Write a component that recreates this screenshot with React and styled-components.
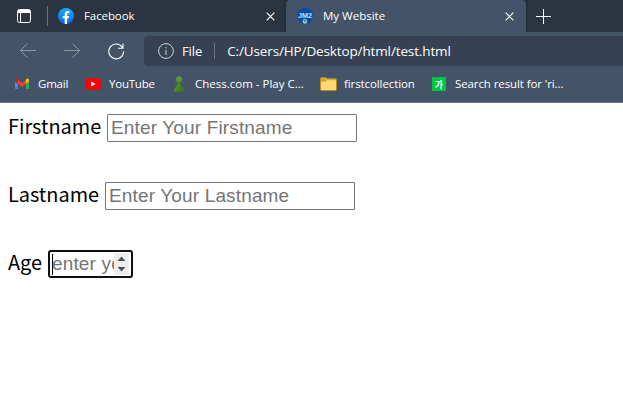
import React from "react";
import styled, { createGlobalStyle } from "styled-components";

const Global = createGlobalStyle`
  * { box-sizing: border-box; }
  body { margin: 0; background: #fff; overflow: hidden; }
`;

const Browser = styled.div`
  width: 623px;
  height: 415px;
  overflow: hidden;
  background: #fff;
  color: #fff;
  font: 12px/16px "Open Sans", "Noto Sans", sans-serif;
`;

const TabStrip = styled.div`
  display: flex;
  height: 32px;
  background: #2b3440;
`;

const TabActions = styled.div`
  display: flex;
  align-items: center;
  width: 48px;
  padding-left: 17px;
  gap: 16px;
`;

const Divider = styled.span`
  width: 1px;
  height: ${(p) => p.$height}px;
  background: #6b737e;
`;

const Tab = styled.div`
  display: flex;
  align-items: center;
  width: ${(p) => p.$width}px;
  padding: 0 ${(p) => (p.$active ? 12 : 11)}px 0 ${(p) => p.$inset}px;
  background: ${(p) => (p.$active ? "#445468" : "transparent")};
  border-radius: ${(p) => (p.$active ? "4px 4px 0 0" : "0 0 4px 0")};
  box-shadow: ${(p) => (p.$active ? "0 0 3px rgba(12, 18, 26, 0.65)" : "none")};
`;

const Label = styled.span`
  flex: none;
  white-space: nowrap;
  font-size: ${(p) => p.$size || 12}px;
  letter-spacing: ${(p) => p.$spacing || 0}px;
  margin-left: ${(p) => p.$gap || 0}px;
`;

const Spacer = styled.span`
  flex: 1;
`;

const NewTab = styled.div`
  display: flex;
  align-items: center;
  padding-left: 10px;
`;

const Toolbar = styled.div`
  position: relative;
  display: flex;
  align-items: center;
  height: 38px;
  padding-left: 20px;
  background: #445468;
`;

const NavButtons = styled.div`
  display: flex;
  align-items: center;
  gap: 27px;
  width: 124px;
`;

const AddressBar = styled.div`
  display: flex;
  align-items: center;
  flex: 1;
  height: 30px;
  padding-left: 14px;
  background: #364253;
  border-radius: 4px 0 0 4px;
`;

const UrlDivider = styled(Divider)`
  margin: 0 12px 0 12px;
`;

const Bookmarks = styled.div`
  display: flex;
  height: 33px;
  padding: 0 0 5px 14px;
  background: #445468;
  border-bottom: 1px solid #68778a;
`;

const Bookmark = styled.div`
  display: flex;
  align-items: center;
  flex: none;
  width: ${(p) => p.$width}px;
`;

const Page = styled.form`
  display: flex;
  flex-direction: column;
  align-items: flex-start;
  gap: 40px;
  padding: 11px 8px;
`;

const Field = styled.label`
  display: flex;
  align-items: center;
  height: 28px;
  color: #000;
  font: 19.9px/28px "Noto Sans CJK JP", sans-serif;
`;

const FieldName = styled.span`
  width: ${(p) => p.$width}px;
  padding-bottom: 5px;
  line-height: 25px;
  white-space: nowrap;
`;

const InputBox = styled.span`
  display: flex;
  align-items: center;
  width: ${(p) => p.$width}px;
  height: 28px;
  overflow: hidden;
  border: ${(p) => (p.$focused ? "2px solid #101010" : "1px solid #767676")};
  border-radius: ${(p) => (p.$focused ? 3 : 1)}px;
  padding-left: ${(p) => (p.$focused ? 2 : 3)}px;
  background: #fff;
`;

const Placeholder = styled.span`
  flex: 1;
  min-width: 0;
  overflow: hidden;
  white-space: nowrap;
  color: #757575;
  font: 19px/24px "Liberation Sans", Arial, sans-serif;
  letter-spacing: 0.15px;
`;

const Caret = styled.span`
  width: 1px;
  height: 21px;
  margin-right: -1px;
  background: #000;
`;

const Spinner = styled.svg`
  flex: none;
  width: 15px;
  height: 22px;
  margin-right: 2px;
  background: #efefef;
`;

const Stroke = styled.svg.attrs({ fill: "none", stroke: "currentColor" })`
  flex: none;
  color: ${(p) => p.$color || "#fff"};
`;

const Art = styled.svg`
  flex: none;
`;

const CloseIcon = () => (
  <Stroke width="9" height="9" viewBox="0 0 9 9" strokeWidth="1.15">
    <path d="M.7.7l7.6 7.6M8.3.7L.7 8.3" />
  </Stroke>
);

const FacebookIcon = () => (
  <Art width="16" height="16" viewBox="0 0 16 16">
    <defs>
      <linearGradient id="fb" x2="0" y2="1">
        <stop stopColor="#19aefa" />
        <stop offset="1" stopColor="#0866e5" />
      </linearGradient>
    </defs>
    <circle cx="8" cy="8" r="8" fill="url(#fb)" />
    <path d="M6.7 16v-5.7H4.8V8h1.9V6.2c0-2.1 1.2-3.1 2.9-3.1l1.7.15v2h-1c-.9 0-1.2.5-1.2 1.2V8h2.1l-.4 2.3H9.1V16z" fill="#fff" />
  </Art>
);

const SiteIcon = () => (
  <Art width="16" height="16" viewBox="0 0 16 16">
    <circle cx="8" cy="8" r="8" fill="#0b4aa8" />
    <text x="8" y="10.3" textAnchor="middle" textLength="14" lengthAdjust="spacingAndGlyphs" fill="#d3e2e6" fontFamily="Liberation Sans, sans-serif" fontWeight="700" fontSize="7.3">JM2</text>
    <circle cx="8" cy="13.4" r="2.3" fill="#8dd5ed" />
    <path d="M6.3 12.3l2-.8.8 1-1.4 2zM8.8 14l1-1v1.6z" fill="#41905b" />
  </Art>
);

const GmailIcon = () => (
  <Art width="16" height="12" viewBox="0 0 16 12">
    <path d="M1 2v8.2q0 .8.8.8H4V5z" fill="#4285f4" />
    <path d="M12 5v6h2.2q.8 0 .8-.8V2z" fill="#34a853" />
    <path d="M4 1.7l4 3.2 4-3.2V5.8L8 9 4 5.8z" fill="#ea4335" />
    <path d="M1 3V2C1 .5 2.5 0 4 1.3v4.5L1 3.4z" fill="#c5221f" />
    <path d="M12 5.8V1.3C13.5 0 15 .5 15 2v1.4z" fill="#fbbc04" />
  </Art>
);

const YouTubeIcon = () => (
  <Art width="16" height="12" viewBox="0 0 16 12">
    <rect x=".3" y=".3" width="15.4" height="11.4" rx="2.3" fill="#f00" />
    <path d="M6.2 3.5v5L10.6 6z" fill="#fff" />
  </Art>
);

const PawnIcon = () => (
  <Art width="12" height="16" viewBox="0 0 12 16">
    <circle cx="6" cy="3" r="2.8" fill="#5c9a34" />
    <path d="M3.3 5.2h5.4l1.1 1.3H2.2z" fill="#4f8a29" />
    <path d="M4.6 6.4h2.8c.1 2.2.8 3.3 2.3 4.8 1.3 1.2 1.8 2.4 1.6 3.8-.7.9-9.9.9-10.6 0-.2-1.4.3-2.6 1.6-3.8 1.5-1.5 2.2-2.6 2.3-4.8z" fill="#4f8a29" />
    <path d="M6 6.4h1.4c.1 2.2.8 3.3 2.3 4.8 1.3 1.2 1.8 2.4 1.6 3.8-.6.7-6 .9-8.8.5 5-1 5.3-3.5 3.5-9.1z" fill="#356b25" opacity=".5" />
  </Art>
);

const FolderIcon = () => (
  <Art width="17" height="14" viewBox="0 0 17 14">
    <path d="M.5 2Q.5.5 2 .5h3.7l1.5 1.2H15q1.5 0 1.5 1.5v9q0 1.3-1.3 1.3H1.8Q.5 13.5.5 12.2z" fill="#ffd976" stroke="#b98c20" />
    <path d="M1 2.2Q1 1 2 1h3.5L7 2.3 5.5 4H1z" fill="#d8a72d" />
    <path d="M1 4.3h4.5l1.7-1.6H16" fill="none" stroke="#b98c20" strokeWidth=".6" />
  </Art>
);

const DictionaryIcon = () => (
  <Art width="14" height="14" viewBox="0 0 14 14">
    <path d="M0 0h2l1 1 1-1h10v14H0z" fill="#00c73c" />
    <text x="7" y="10.9" textAnchor="middle" fill="#fff" fontFamily="Noto Sans CJK KR, sans-serif" fontWeight="700" fontSize="9">가</text>
  </Art>
);

const bookmarks = [
  { icon: <GmailIcon />, text: "Gmail", width: 71, gap: 8, spacing: -0.2 },
  { icon: <YouTubeIcon />, text: "YouTube", width: 88, gap: 8, spacing: -0.22 },
  { icon: <PawnIcon />, text: "Chess.com - Play C...", width: 147, gap: 10, spacing: 0 },
  { icon: <FolderIcon />, text: "firstcollection", width: 112, gap: 7, spacing: -0.1 },
  { icon: <DictionaryIcon />, text: "Search result for 'ri...", width: 160, gap: 9, spacing: -0.1 },
];

const fields = [
  { name: "Firstname", offset: 99, placeholder: "Enter Your Firstname" },
  { name: "Lastname", offset: 97, placeholder: "Enter Your Lastname" },
];

export default function App() {
  return (
    <Browser>
      <Global />
      <TabStrip>
        <TabActions>
          <Stroke width="14" height="14" viewBox="0 0 14 14">
            <rect x=".5" y=".5" width="13" height="13" rx="2" />
            <path d="M1 1.5h12M1 2.5h12M1 3.5h12M3.5 4v9" />
          </Stroke>
          <Divider $height={20} />
        </TabActions>
        <Tab $width={238} $inset={10}>
          <FacebookIcon />
          <Label $gap={10} $size={11.5} $spacing={-0.1}>Facebook</Label>
          <Spacer />
          <CloseIcon />
        </Tab>
        <Tab $active $width={240} $inset={11}>
          <SiteIcon />
          <Label $gap={10} $size={11.5}>My Website</Label>
          <Spacer />
          <CloseIcon />
        </Tab>
        <NewTab>
          <Stroke width="15" height="15" viewBox="0 0 15 15">
            <path d="M7.5 0v15M0 7.5h15" />
          </Stroke>
        </NewTab>
      </TabStrip>
      <Toolbar>
        <NavButtons>
          <Stroke $color="#8d98a5" width="17" height="16" viewBox="0 0 17 16">
            <path d="M16 7.5H.8M7.5.5l-7 7 7 7" />
          </Stroke>
          <Stroke $color="#8d98a5" width="17" height="16" viewBox="0 0 17 16">
            <path d="M0 7.5h15.5M8.5.5l7 7-7 7" />
          </Stroke>
          <Stroke width="17" height="17" viewBox="0 0 17 17" strokeWidth="1.1">
            <path d="M14.6 4.7A7.4 7.4 0 1 0 15.6 8.5M15 .5v4.7h-4.7" />
          </Stroke>
        </NavButtons>
        <AddressBar>
          <Stroke $color="#cdd3da" width="16" height="16" viewBox="0 0 16 16">
            <circle cx="8" cy="8" r="7.4" />
            <path d="M8 6.8V12M8 4v1.3" />
          </Stroke>
          <Label $gap={8} $size={13} $spacing={-0.1}>File</Label>
          <UrlDivider $height={16} />
          <Label $size={13.5} $spacing={-0.13}>C:/Users/HP/Desktop/html/test.html</Label>
        </AddressBar>
      </Toolbar>
      <Bookmarks>
        {bookmarks.map(({ icon, text, width, gap, spacing }) => (
          <Bookmark key={text} $width={width}>
            {icon}
            <Label $gap={gap} $size={11.5} $spacing={spacing}>{text}</Label>
          </Bookmark>
        ))}
      </Bookmarks>
      <Page>
        {fields.map(({ name, offset, placeholder }) => (
          <Field key={name}>
            <FieldName $width={offset}>{name}</FieldName>
            <InputBox $width={250}>
              <Placeholder>{placeholder}</Placeholder>
            </InputBox>
          </Field>
        ))}
        <Field>
          <FieldName $width={40}>Age</FieldName>
          <InputBox $width={85} $focused>
            <Caret />
            <Placeholder>enter your age</Placeholder>
            <Spinner viewBox="0 0 15 22">
              <path d="M3.5 8l4-4.5 4 4.5zM3.5 14h8l-4 4.5z" fill="#505050" />
            </Spinner>
          </InputBox>
        </Field>
      </Page>
    </Browser>
  );
}
